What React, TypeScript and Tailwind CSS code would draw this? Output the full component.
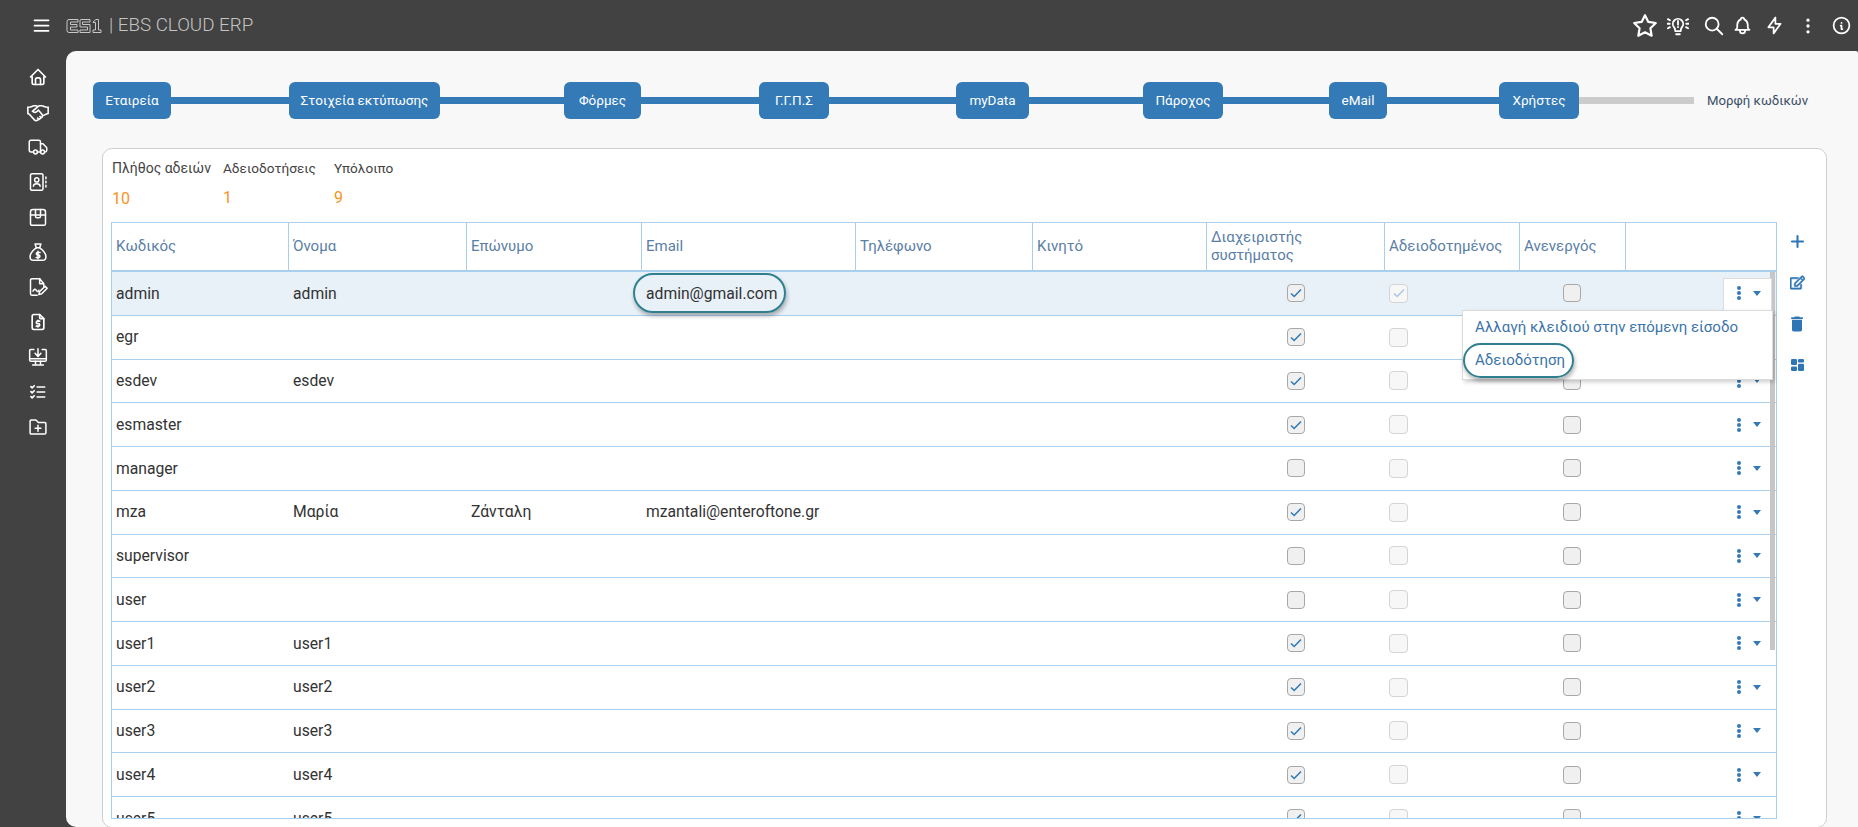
import React from "react";
import {
  TbHome,
  TbFileDollar,
  TbListCheck,
  TbBolt,
  TbBell,
  TbSearch,
  TbStar,
  TbInfoCircle,
  TbMenu2,
  TbPlus,
  TbDotsVertical,
} from "react-icons/tb";
import { LiaHandshake } from "react-icons/lia";
import { FaRegEdit } from "react-icons/fa";
import { MdDelete } from "react-icons/md";

type IconProps = { className?: string };

function Svg({ className, children, sw = 1.8 }: IconProps & { children: React.ReactNode; sw?: number }) {
  return (
    <svg className={className} width="1em" height="1em" viewBox="0 0 24 24" fill="none" stroke="currentColor" strokeWidth={sw} strokeLinecap="round" strokeLinejoin="round">
      {children}
    </svg>
  );
}

const Handshake = ({ className }: IconProps) => <LiaHandshake className={`${className} scale-125`} />;

const Truck = ({ className }: IconProps) => (
  <Svg className={className}>
    <path d="M6.5 18 H3.5 Q1.5 18 1.5 16 V6 Q1.5 4 3.5 4 H13 Q15 4 15 6 V18 H11" />
    <path d="M15 8 H18 L22.5 13 V16 Q22.5 18 20.5 18" />
    <circle cx="9" cy="18" r="2.3" />
    <circle cx="17.5" cy="18" r="2.3" />
  </Svg>
);

const ContactBook = ({ className }: IconProps) => (
  <Svg className={className}>
    <rect x="3" y="2" width="15" height="20" rx="2" />
    <circle cx="10.5" cy="9.5" r="2.5" />
    <path d="M6.5 17 Q6.5 14 10.5 14 T14.5 17" />
    <path d="M21.5 6 V8 M21.5 11 V13 M21.5 16 V18" />
  </Svg>
);

const Box = ({ className }: IconProps) => (
  <Svg className={className}>
    <path d="M6 3 H18 Q21 3 21 6 V20 Q21 22 19 22 H5 Q3 22 3 20 V6 Q3 3 6 3 Z" />
    <path d="M3 9.5 H21" />
    <path d="M9 3 V11 Q9 13 11 13 H13 Q15 13 15 11 V3" />
  </Svg>
);

const MoneyBag = ({ className }: IconProps) => (
  <Svg className={className}>
    <path d="M8.5 2.5 H15.5 L14 7 H10 Z" />
    <path d="M10 7 Q2.5 12 2.5 18 Q2.5 22 6.5 22 H17.5 Q21.5 22 21.5 18 Q21.5 12 14 7" />
    <path d="M14.5 12.5 H11.5 Q10 12.5 10 14 T11.5 15.5 H12.8 Q14.3 15.5 14.3 17 T12.8 18.5 H9.8 M12 11 V20" />
  </Svg>
);

const FileSign = ({ className }: IconProps) => (
  <Svg className={className}>
    <path d="M14 2 H5 Q3 2 3 4 V20 Q3 22 5 22 H11" />
    <path d="M14 2 V8 H19 V11 M14 2 L19 8" />
    <path d="M6 17 Q8 13 10 16 T13 16" />
    <path d="M13 21 L14 17.5 L20.5 11 L23 13.5 L16.5 20 Z" />
  </Svg>
);

const MonitorDown = ({ className }: IconProps) => (
  <Svg className={className}>
    <path d="M7 3 H3.5 Q2 3 2 4.5 V15.5 Q2 17 3.5 17 H20.5 Q22 17 22 15.5 V4.5 Q22 3 20.5 3 H17" />
    <path d="M12 2 V11 M8.5 7.5 L12 11.5 L15.5 7.5" />
    <path d="M3 14 H21 M9 17 V21.5 M15 17 V21.5 M5.5 21.5 H18.5" />
  </Svg>
);

const FolderAdd = ({ className }: IconProps) => (
  <Svg className={className}>
    <path d="M2.5 5 Q2.5 3.5 4 3.5 H9.5 L12.5 6.5 H20 Q21.5 6.5 21.5 8 V19 Q21.5 20.5 20 20.5 H4 Q2.5 20.5 2.5 19 Z" />
    <path d="M12 10 V17 M8.5 13.5 H15.5" />
  </Svg>
);

const BulbAlert = ({ className }: IconProps) => (
  <Svg className={className} sw={2}>
    <path d="M9 17.5 Q9 15 7.8 13.5 A5.6 5.6 0 1 1 16.2 13.5 Q15 15 15 17.5 Z" />
    <path d="M10 21 H14" />
    <path d="M12 6.5 V10.5 M12 13 V13.3" />
    <path d="M1 4.5 L3.2 5.8 M0.5 9.5 H3 M1 14.5 L3.2 13.2 M23 4.5 L20.8 5.8 M23.5 9.5 H21 M23 14.5 L20.8 13.2" />
  </Svg>
);

const Blocks = ({ className }: IconProps) => (
  <svg className={className} width="13" height="12" viewBox="0 0 13 12" fill="currentColor">
    <rect x="0" y="0" width="6" height="6" rx="1.2" />
    <rect x="7" y="0" width="6" height="3.6" rx="1.2" />
    <rect x="0" y="7.4" width="6" height="4.6" rx="1.2" />
    <rect x="7" y="4.8" width="6" height="7.2" rx="1.2" />
  </svg>
);

const steps = [
  { label: "Εταιρεία", width: "w-[78px]", line: "w-[118px]" },
  { label: "Στοιχεία εκτύπωσης", width: "w-[151px]", line: "w-[124px]" },
  { label: "Φόρμες", width: "w-[77px]", line: "w-[118px]" },
  { label: "Γ.Γ.Π.Σ", width: "w-[70px]", line: "w-[127px]" },
  { label: "myData", width: "w-[73px]", line: "w-[114px]" },
  { label: "Πάροχος", width: "w-[80px]", line: "w-[106px]" },
  { label: "eMail", width: "w-[58px]", line: "w-[112px]" },
  { label: "Χρήστες", width: "w-[80px]", line: "" },
];

const sideIcons = [
  TbHome,
  Handshake,
  Truck,
  ContactBook,
  Box,
  MoneyBag,
  FileSign,
  TbFileDollar,
  MonitorDown,
  TbListCheck,
  FolderAdd,
];

const headers = [
  "Κωδικός",
  "Όνομα",
  "Επώνυμο",
  "Email",
  "Τηλέφωνο",
  "Κινητό",
  "Διαχειριστής συστήματος",
  "Αδειοδοτημένος",
  "Ανενεργός",
  "",
];

const users = [
  { code: "admin", name: "admin", surname: "", email: "admin@gmail.com", sys: true, licensed: true },
  { code: "egr", name: "", surname: "", email: "", sys: true },
  { code: "esdev", name: "esdev", surname: "", email: "", sys: true },
  { code: "esmaster", name: "", surname: "", email: "", sys: true },
  { code: "manager", name: "", surname: "", email: "", sys: false },
  { code: "mza", name: "Μαρία", surname: "Ζάνταλη", email: "mzantali@enteroftone.gr", sys: true },
  { code: "supervisor", name: "", surname: "", email: "", sys: false },
  { code: "user", name: "", surname: "", email: "", sys: false },
  { code: "user1", name: "user1", surname: "", email: "", sys: true },
  { code: "user2", name: "user2", surname: "", email: "", sys: true },
  { code: "user3", name: "user3", surname: "", email: "", sys: true },
  { code: "user4", name: "user4", surname: "", email: "", sys: true },
  { code: "user5", name: "user5", surname: "", email: "", sys: true },
];

const gridCols = "grid grid-cols-[177px_178px_175px_214px_177px_174px_178px_135px_106px_152px]";

function Check({ checked, disabled }: { checked?: boolean; disabled?: boolean }) {
  return (
    <span
      className={
        disabled
          ? "flex h-[19px] w-[19px] items-center justify-center rounded-[4px] border border-[#d4d4d4] bg-[#f7f7f7]"
          : "flex h-[18px] w-[18px] items-center justify-center rounded-[4px] border-[1.5px] border-[#a8a8a8] bg-[#f0f0f0]"
      }
    >
      {checked && (
        <svg width="12" height="10" viewBox="0 0 12 10" fill="none">
          <path d="M1 5.5 L4.2 8.5 L11 1.5" stroke={disabled ? "#aac8e6" : "#337ab7"} strokeWidth="1.6" />
        </svg>
      )}
    </span>
  );
}

function Kebab() {
  return (
    <span className="flex w-[20px] flex-col items-center gap-[1px]">
      <i className="h-[4px] w-[4px] rounded-full bg-[#337ab7]" />
      <i className="h-[4px] w-[4px] rounded-full bg-[#337ab7]" />
      <i className="h-[4px] w-[4px] rounded-full bg-[#337ab7]" />
    </span>
  );
}

function Caret() {
  return <span className="ml-[4px] h-0 w-0 border-x-[4.5px] border-t-[5px] border-x-transparent border-t-[#337ab7]" />;
}

function Logo() {
  return (
    <svg width="36" height="16" viewBox="0 0 36 16" fill="none" stroke="#c8c8c8" strokeWidth="1">
      <path d="M3 1.5 H12 V4 H4.5 V6.5 H11 V9 H4.5 V12 H12 V14.5 H3 Q1 14.5 1 12.5 V3.5 Q1 1.5 3 1.5 Z" />
      <path d="M15 1.5 H24 V4 H16.5 V6.5 H24 V14.5 H14 V12 H21.5 V9 H14 V3 Q14 1.5 15 1.5 Z" />
      <path d="M27 4 L30 1.5 H32.5 V12 H35 V14.5 H27 V12 H29.5 V4.5 H27 Z" />
    </svg>
  );
}

export default function App() {
  return (
    <div className="flex h-screen w-screen flex-col overflow-hidden bg-[#424242] font-['Roboto',sans-serif] text-[#333]">
      {/* Top bar */}
      <header className="flex h-[51px] shrink-0 items-center text-white">
        <TbMenu2 className="ml-[31px] text-[21px]" />
        <span className="ml-[14px] flex">
          <Logo />
        </span>
        <span className="ml-[7px] text-[18.8px] font-light text-[#c4c4c4]">| EBS CLOUD ERP</span>
        <div className="ml-auto flex items-center pr-[6px]">
          <TbStar className="mr-[9px] text-[26px]" />
          <BulbAlert className="mr-[14px] text-[22px]" />
          <TbSearch className="mr-[7px] text-[22px]" />
          <TbBell className="mr-[11px] text-[21px]" />
          <TbBolt className="mr-[13px] text-[21px]" />
          <TbDotsVertical className="mr-[13px] text-[20px]" />
          <TbInfoCircle className="text-[21px]" />
        </div>
      </header>

      <div className="flex min-h-0 flex-1">
        {/* Sidebar */}
        <aside className="flex w-[66px] shrink-0 flex-col items-center gap-[15px] pt-[16px] text-white">
          {sideIcons.map((Icon, i) => (
            <Icon key={i} className="ml-[10px] text-[20px]" />
          ))}
        </aside>

        <main className="flex min-w-0 flex-1 flex-col rounded-l-[10px] rounded-tr-[2px] bg-[#f8f8f8] pt-[31px]">
          {/* Stepper */}
          <div className="flex h-[37px] shrink-0 items-center pl-[27px]">
            {steps.map((s) => (
              <React.Fragment key={s.label}>
                <button
                  className={`flex h-[37px] shrink-0 items-center justify-center rounded-[6px] bg-[#337ab7] text-[13.5px] text-white ${s.width}`}
                >
                  {s.label}
                </button>
                {s.line && <span className={`h-[7px] shrink-0 bg-[#337ab7] ${s.line}`} />}
              </React.Fragment>
            ))}
            <span className="h-[7px] w-[115px] shrink-0 bg-[#cccccc]" />
            <span className="ml-[13px] text-[13.2px] text-[#3a4f66]">Μορφή κωδικών</span>
          </div>

          {/* Card */}
          <section className="mt-[29px] mr-[31px] ml-[36px] flex h-[680px] shrink-0 rounded-[10px] border border-[#cfcfcf] bg-white">
            <div className="min-w-0 pl-[8px]">
              <div className="flex h-[73px] pt-[9px] text-[14px]">
                <div className="w-[111px] pl-[1px]">
                  <div className="text-[#444]">Πλήθος αδειών</div>
                  <div className="mt-[8px] text-[16px] text-[#f7941d]">10</div>
                </div>
                <div className="w-[111px] pl-[1px]">
                  <div className="text-[13.6px] text-[#444]">Αδειοδοτήσεις</div>
                  <div className="mt-[8px] text-[16px] text-[#f7941d]">1</div>
                </div>
                <div className="w-[111px] pl-[1px]">
                  <div className="text-[13.6px] text-[#444]">Υπόλοιπο</div>
                  <div className="mt-[8px] text-[16px] text-[#f7941d]">9</div>
                </div>
              </div>

              {/* Users grid */}
              <div className="relative h-[597px] w-[1666px] overflow-hidden border-y border-[#a9cfee]">
                <div className={`${gridCols} h-[49px] border-r border-b-2 border-[#a9cfee]`}>
                  {headers.map((h, i) => (
                    <div
                      key={i}
                      className="flex items-center border-l border-[#a9cfee] px-[4px] pb-[2px] text-[15px] leading-[18px] text-[#5a7ea6]"
                    >
                      {h}
                    </div>
                  ))}
                </div>

                {users.map((u, i) => (
                  <div
                    key={u.code}
                    className={`${gridCols} h-[43.75px] border-x border-b border-[#a9cfee] text-[15.7px] ${i === 0 ? "bg-[#e8f0f8]" : ""}`}
                  >
                    <div className="flex items-center pl-[4px]">{u.code}</div>
                    <div className="flex items-center pl-[4px]">{u.name}</div>
                    <div className="flex items-center pl-[4px]">{u.surname}</div>
                    <div className="flex items-center pl-[4px]">{u.email}</div>
                    <div />
                    <div />
                    <div className="flex items-center justify-center">
                      <Check checked={u.sys} />
                    </div>
                    <div className="flex items-center pl-[4px]">
                      <Check checked={u.licensed} disabled />
                    </div>
                    <div className="flex items-center justify-center pr-[2px]">
                      <Check />
                    </div>
                    <div className="flex h-full items-center pl-[103px]">
                      <Kebab />
                      <Caret />
                    </div>
                  </div>
                ))}

                {/* Scrollbar thumb */}
                <span className="absolute top-[49px] right-[2px] h-[378px] w-[5px] bg-[#c6c6c6]" />

                {/* Open row button + menu */}
                <span className="absolute top-[55px] left-[1612px] flex h-[34px] w-[49px] items-start border border-b-0 border-[#dcdcdc] bg-white pt-[7px] pl-[5px]">
                  <Kebab />
                  <span className="mt-[5px] flex">
                    <Caret />
                  </span>
                </span>
                <div className="absolute top-[87px] left-[1351px] h-[70px] w-[311px] border border-[#dcdcdc] bg-white pt-[6px] pl-[12px] text-[15px] text-[#3b74aa] shadow-[2px_2px_4px_rgba(0,0,0,0.2)]">
                  <div className="leading-[20px]">Αλλαγή κλειδιού στην επόμενη είσοδο</div>
                  <div className="mt-[13px] leading-[20px]">Αδειοδότηση</div>
                </div>

                {/* Highlight ovals */}
                <span className="absolute top-[50px] left-[522px] h-[40px] w-[153px] rounded-full border-2 border-[#2f7f8f] shadow-[1px_3px_4px_rgba(0,0,0,0.3)]" />
                <span className="absolute top-[120px] left-[1352px] h-[35px] w-[111px] rounded-full border-2 border-[#2f7f8f] shadow-[1px_3px_4px_rgba(0,0,0,0.3)]" />
              </div>
            </div>

            {/* Row toolbar */}
            <div className="flex flex-1 flex-col items-center pt-[72px] pr-[9px] text-[#2f76b5]">
              <span className="flex h-[41px] items-center"><TbPlus strokeWidth={2.6} className="text-[19px]" /></span>
              <span className="flex h-[41px] items-center"><FaRegEdit className="stroke-current stroke-[24px] text-[15px]" /></span>
              <span className="flex h-[41px] items-center"><MdDelete className="text-[20px]" /></span>
              <span className="flex h-[41px] items-center"><Blocks /></span>
            </div>
          </section>
        </main>
      </div>
    </div>
  );
}
